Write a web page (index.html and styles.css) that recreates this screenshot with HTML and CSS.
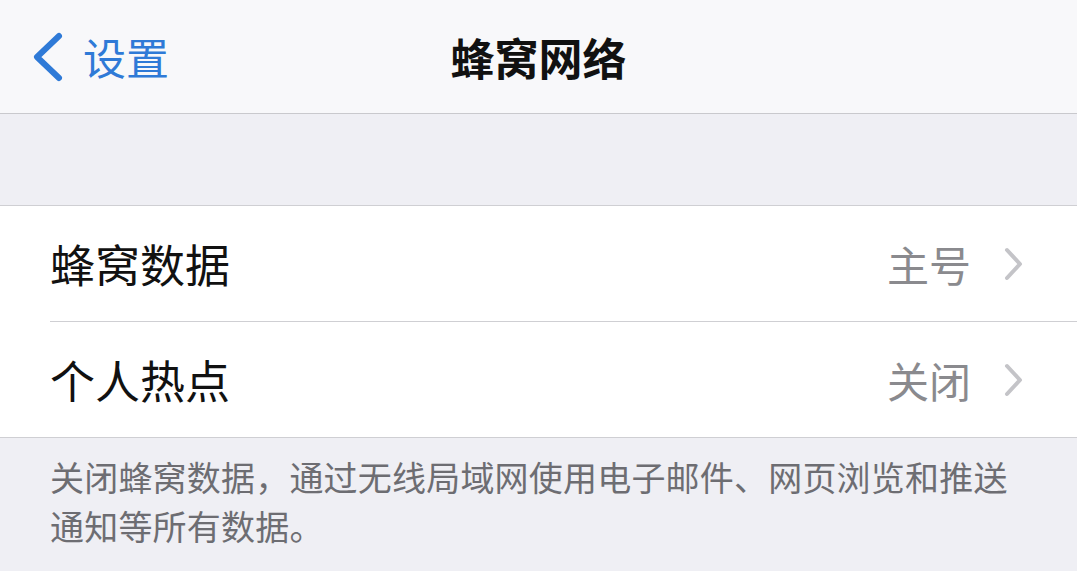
FILE: index.html
```html
<!DOCTYPE html>
<html lang="zh-CN">
<head>
<meta charset="utf-8">
<title>蜂窝网络</title>
<link rel="stylesheet" href="styles.css">
</head>
<body>
<header class="nav">
  <a class="back">
    <svg class="back-icon" width="34" height="52" viewBox="0 0 34 52"><path d="M29 5 L7 26 L29 47" fill="none" stroke="#2f7ad7" stroke-width="6" stroke-linecap="round" stroke-linejoin="round"/></svg>
    <span class="back-text">设置</span>
  </a>
  <h1 class="title">蜂窝网络</h1>
  <div class="nav-spacer"></div>
</header>
<div class="spacer"></div>
<section class="group">
  <div class="row">
    <span class="label">蜂窝数据</span>
    <span class="value">主号</span>
    <svg class="chev" width="22" height="34" viewBox="0 0 22 34"><path d="M4 3 L17 17 L4 31" fill="none" stroke="#c4c4c8" stroke-width="4" stroke-linecap="round" stroke-linejoin="round"/></svg>
  </div>
  <div class="sep"></div>
  <div class="row">
    <span class="label">个人热点</span>
    <span class="value">关闭</span>
    <svg class="chev" width="22" height="34" viewBox="0 0 22 34"><path d="M4 3 L17 17 L4 31" fill="none" stroke="#c4c4c8" stroke-width="4" stroke-linecap="round" stroke-linejoin="round"/></svg>
  </div>
</section>
<p class="footer">关闭蜂窝数据，通过无线局域网使用电子邮件、网页浏览和推送通知等所有数据。</p>
</body>
</html>
```

FILE: styles.css
```css
html, body {
  margin: 0;
  padding: 0;
  background: #efeff4;
  font-family: "Noto Sans CJK SC", "Noto Sans", sans-serif;
}
.nav {
  height: 113px;
  background: #f8f8fa;
  border-bottom: 1px solid #c9c9cd;
  display: grid;
  grid-template-columns: 1fr auto 1fr;
  align-items: center;
}
.back {
  display: flex;
  align-items: center;
  padding-left: 30px;
  color: #2f7ad7;
}
.back-icon {
  display: block;
  margin-right: 19px;
}
.back-text {
  font-size: 43px;
  line-height: 1;
}
.title {
  margin: 0;
  font-size: 44px;
  font-weight: 700;
  color: #111;
  line-height: 1;
}
.spacer {
  height: 91px;
}
.group {
  background: #fff;
  border-top: 1px solid #cfcfd3;
  border-bottom: 1px solid #cfcfd3;
}
.row {
  height: 115px;
  display: flex;
  align-items: center;
  padding: 0 52px 0 50px;
}
.label {
  flex: 1;
  font-size: 45px;
  color: #111;
  line-height: 1;
}
.value {
  font-size: 42px;
  color: #8a8a8e;
  line-height: 1;
  margin-right: 32px;
}
.chev {
  display: block;
}
.sep {
  height: 1px;
  background: #cfcfd3;
  margin-left: 50px;
}
.footer {
  margin: 0;
  padding: 14px 40px 0 50px;
  font-size: 34px;
  letter-spacing: 0.2px;
  line-height: 49px;
  color: #6d6d72;
}
```
